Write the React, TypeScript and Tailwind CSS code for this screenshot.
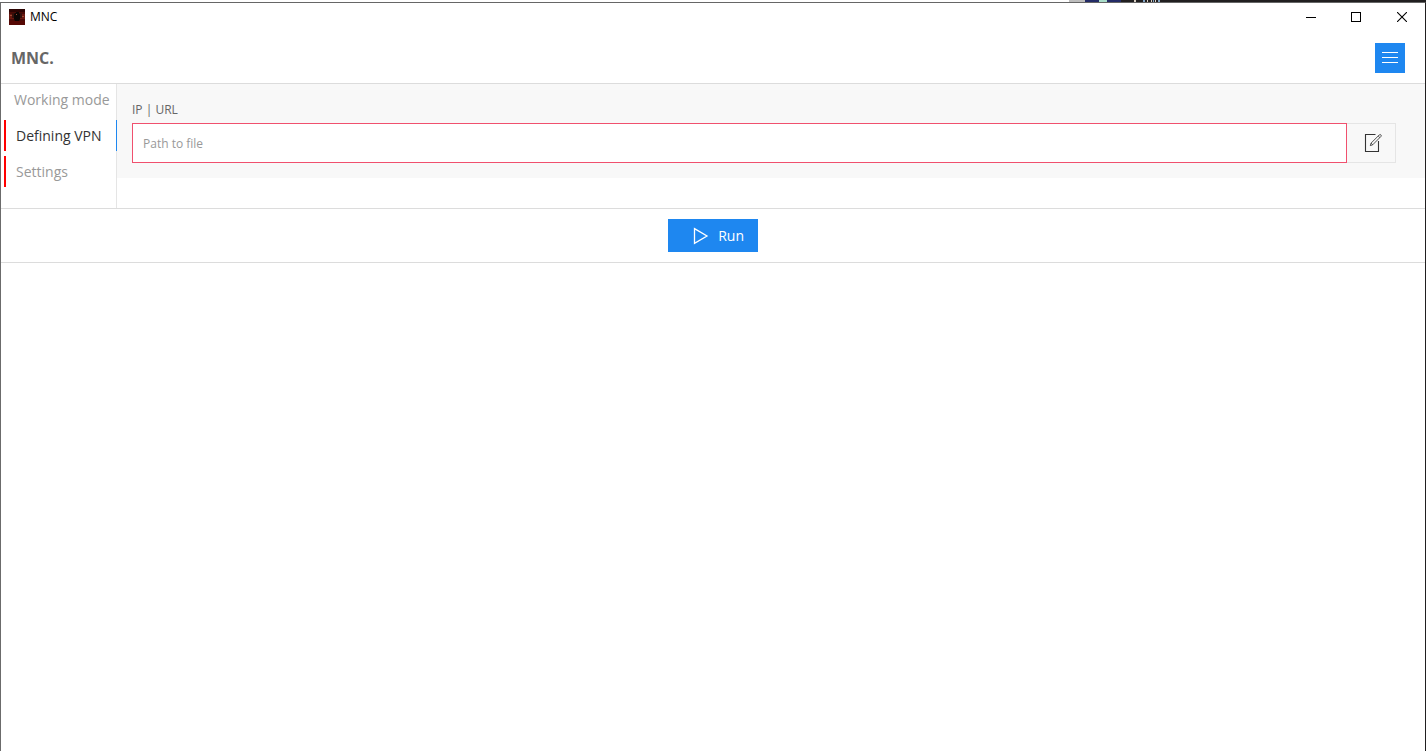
import { useState } from "react";
import clsx from "clsx";

const tabs = [
  { id: "mode", label: "Working mode", invalid: false },
  { id: "vpn", label: "Defining VPN", invalid: true },
  { id: "settings", label: "Settings", invalid: true }
];

function AppIcon() {
  return (
    <svg width="16" height="16" viewBox="0 0 16 16" aria-hidden="true">
      <rect width="16" height="16" fill="#4a0a06" />
      <rect width="16" height="3" fill="#2c0403" />
      <rect y="5" width="16" height="5" fill="#6a1810" />
      <rect y="12" width="16" height="4" fill="#560804" />
      <path d="M3 4h2v5H3zM11 4h2v5h-2z" fill="#35100b" />
      <path d="M6 4h1V3h3v1l1 1v5l-1 2H6l-1-2V5z" fill="#0c0504" />
      <path d="M1 6h2v1H1zM13 7h2v1h-2zM7 5h1v1H7z" fill="#9c4a34" />
    </svg>
  );
}

function MenuIcon() {
  return (
    <svg width="20" height="20" viewBox="0 0 20 20" fill="#fff" aria-hidden="true">
      <rect x="2" y="4" width="16" height="1" />
      <rect x="2" y="9" width="16" height="1" />
      <rect x="2" y="14" width="16" height="1" />
    </svg>
  );
}

function FileEditIcon() {
  return (
    <svg width="20" height="20" viewBox="0 0 20 20" fill="none" stroke="#333" aria-hidden="true">
      <path d="M12.5 1.5h-10v17h13V8" strokeWidth="1.1" />
      <path d="M7.3 12.6l.8-2.5 8.2-8.2a1.05 1.05 0 0 1 1.6 1.6l-8.2 8.3zM8.1 10.1l1.6 1.7M15.2 3l1.6 1.6" strokeWidth=".85" />
    </svg>
  );
}

function PlayIcon() {
  return (
    <svg width="20" height="20" viewBox="0 0 20 20" fill="none" stroke="#fff" strokeWidth="1.3" aria-hidden="true">
      <path d="M4.5 2.6 17 10 4.5 17.4z" />
    </svg>
  );
}

// Sliver of the desktop visible above the window
function DesktopEdge() {
  return (
    <div className="flex h-0.5 justify-end" aria-hidden="true">
      <span className="w-4 bg-[#bdbdbd]" />
      <span className="w-3.5 bg-[#232b66]" />
      <span className="w-2 bg-[#a9ddc9]" />
      <span className="w-3.5 bg-[#232b66]" />
      <span className="w-[305px] bg-[#211f20]">
        <svg className="block" width="60" height="2" viewBox="0 0 60 2">
          <path d="M13 0h2v2h-2zM26 0h1v2h-1zM30 0h1v2h-1zM34 0h1v2h-1z" fill="#d8cfc4" />
          <path d="M22 0h2v2h-2zM32 0h1v2h-1zM37 0h2v2h-2z" fill="#7fa3c4" />
        </svg>
      </span>
    </div>
  );
}

function TitleBar() {
  return (
    <div className="flex h-[30px] items-center justify-between pb-0.5 pl-2">
      <div className="flex items-center gap-[5px] text-xs text-black">
        <AppIcon />
        <span>MNC</span>
      </div>
      <div className="flex">
        <button type="button" aria-label="Minimize" className="flex h-7 w-11 items-center justify-center">
          <svg width="10" height="10" viewBox="0 0 10 10">
            <path d="M0 5h10v1H0z" />
          </svg>
        </button>
        <button type="button" aria-label="Maximize" className="flex h-7 w-[46px] items-center justify-center">
          <svg width="10" height="10" viewBox="0 0 10 10" fill="none" stroke="#000">
            <rect x=".5" y=".5" width="9" height="9" />
          </svg>
        </button>
        <button type="button" aria-label="Close" className="flex h-7 w-[46px] items-center justify-center">
          <svg width="10" height="10" viewBox="0 0 10 10" stroke="#000" strokeWidth="1.1">
            <path d="M0 0l10 10M10 0L0 10" />
          </svg>
        </button>
      </div>
    </div>
  );
}

export default function App() {
  const [active, setActive] = useState("vpn");
  const [path, setPath] = useState("");

  return (
    <div className="flex min-h-screen flex-col bg-white font-['Open_Sans','Noto_Sans',sans-serif] text-[#666]">
      <DesktopEdge />
      <div className="flex-1 border-t border-r border-l border-t-[#666] border-r-[#211f20] border-l-[#6b6b6b]">
        <TitleBar />

        <header className="flex h-[51px] items-center justify-between border-b border-[#dcdcdc] pr-5 pl-2.5">
          <h1 className="text-base font-bold">MNC.</h1>
          <button type="button" aria-label="Menu" className="flex size-[30px] items-center justify-center bg-[#1e87f0]">
            <MenuIcon />
          </button>
        </header>

        <div className="flex h-[125px] border-b border-[#dcdcdc]">
          <nav className="flex w-[116px] shrink-0 flex-col gap-[5px] border-r border-[#e5e5e5] pl-[3px] text-sm">
            {tabs.map((tab) => (
              <button
                key={tab.id}
                type="button"
                onClick={() => setActive(tab.id)}
                className={clsx(
                  "-mr-px h-[31px] border-r pl-2.5 text-left whitespace-nowrap",
                  tab.invalid && "border-l-2 border-l-[#f00]",
                  tab.id === active ? "border-r-[#1e87f0] text-[#333]" : "border-r-[#e5e5e5] text-[#999]"
                )}
              >
                {tab.label}
              </button>
            ))}
          </nav>

          <main className="min-w-0 flex-1">
            <div className="bg-[#f8f8f8] pt-4 pr-[29px] pb-[15px] pl-[15px]">
              <label htmlFor="path" className="block h-[23px] text-xs leading-5">
                IP | URL
              </label>
              <div className="flex h-10">
                <input
                  id="path"
                  type="text"
                  value={path}
                  onChange={(e) => setPath(e.target.value)}
                  placeholder="Path to file"
                  className="min-w-0 flex-1 border border-[#f0506e] bg-white px-2.5 pt-0.5 text-xs placeholder:text-[#999]"
                />
                <button
                  type="button"
                  aria-label="Choose file"
                  className="flex w-[49px] items-center justify-center border border-l-0 border-[#e5e5e5] pl-1"
                >
                  <FileEditIcon />
                </button>
              </div>
            </div>
          </main>
        </div>

        <div className="flex justify-center border-b border-[#dcdcdc] py-2.5">
          <button
            type="button"
            className="flex h-[33px] w-[90px] items-center justify-end gap-2 bg-[#1e87f0] pr-3.5 text-sm text-white"
          >
            <PlayIcon />
            Run
          </button>
        </div>
      </div>
    </div>
  );
}
